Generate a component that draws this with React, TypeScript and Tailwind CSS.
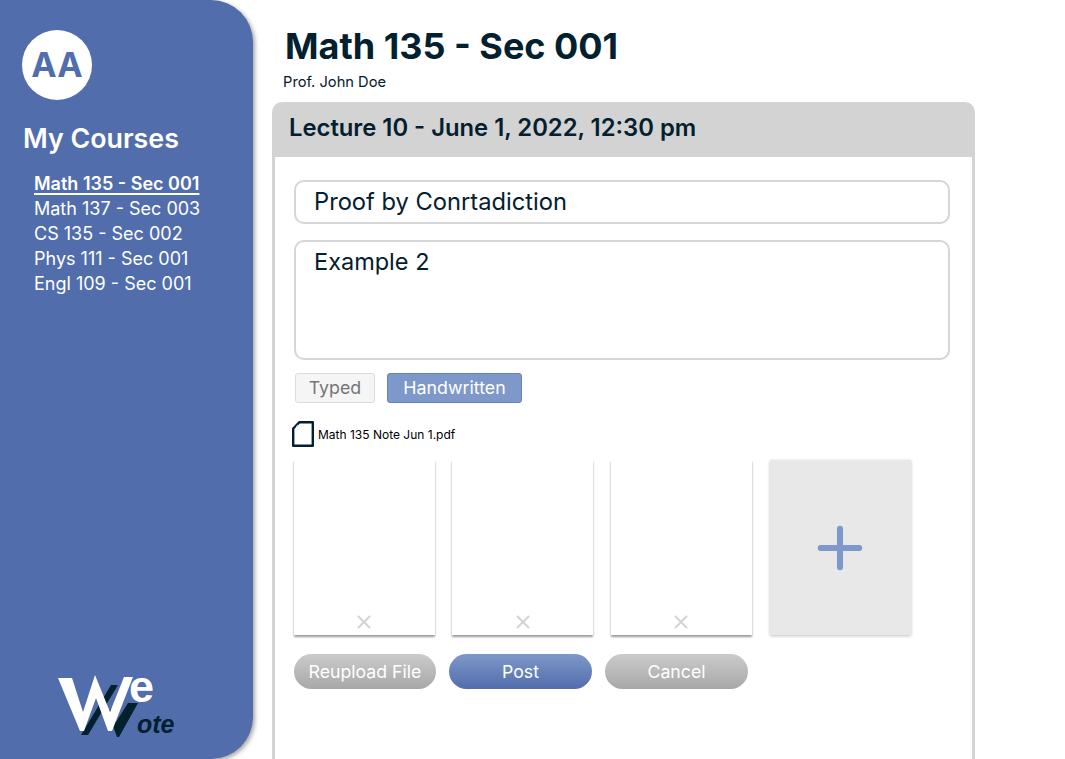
import React from 'react';
import { Plus, X } from 'lucide-react';

const courses = ['Math 135 - Sec 001', 'Math 137 - Sec 003', 'CS 135 - Sec 002', 'Phys 111 - Sec 001', 'Engl 109 - Sec 001'];

const Logo = () => (
  <svg width="124" height="80" viewBox="0 -10 124 80" className="block">
    <polygon points="23,67 30,67 60,17 53,17" fill="#03202f" />
    <polygon points="50,44 59,69 61,69 80,35 70,35 58,54 54,40" fill="#03202f" />
    <polygon points="0,10 14,10 25,44 37,7 52,44 66,9 75,9 54,63 50,63 38,30 26,63 22,63" fill="#ffffff" />
    <text x="71" y="34" fontSize="45" fontWeight="700" fill="#ffffff" fontFamily="'Liberation Sans', sans-serif">e</text>
    <text x="79" y="65" fontSize="25" fontWeight="700" fontStyle="italic" fill="#03202f" fontFamily="'Liberation Sans', sans-serif">ote</text>
  </svg>
);

const PageThumb = () => (
  <div className="w-[141px] h-[175px] bg-white flex items-end justify-center pb-[2px] shadow-[0_2px_2px_rgba(0,0,0,0.4)]">
    <X size={22} strokeWidth={2.2} className="text-[#d4d4d4]" />
  </div>
);

const App: React.FC = () => {
  return (
    <div className="w-[1065px] h-[759px] overflow-hidden bg-white flex text-[#03202f] font-['Inter',sans-serif]">
      {/* Sidebar */}
      <aside className="w-[253px] h-[759px] shrink-0 bg-[#526dac] rounded-r-[42px] shadow-[2px_2px_4px_rgba(0,0,0,0.35)] flex flex-col pt-[30px] pl-[22px]">
        <div className="w-[70px] h-[70px] rounded-full bg-white flex items-center justify-center text-[#526dac] text-[34px] font-bold leading-none">AA</div>
        <h2 className="mt-[21px] ml-px text-[26.8px] leading-[34px] font-semibold text-white">My Courses</h2>
        <ul className="mt-[16px] ml-3 text-[18px] leading-[25px] text-white">
          {courses.map((c, i) => (
            <li key={c} className={i === 0 ? 'font-semibold underline decoration-2 underline-offset-[3px]' : ''}>
              {c}
            </li>
          ))}
        </ul>
        <div className="mt-auto mb-[21px] ml-[36px]">
          <Logo />
        </div>
      </aside>

      {/* Main */}
      <main className="ml-[19px] w-[703px] flex flex-col">
        <h1 className="mt-[24px] ml-[13px] text-[36px] leading-[44px] font-bold">Math 135 - Sec 001</h1>
        <p className="mt-[6px] ml-[11px] text-[14.7px] leading-[17px]">Prof. John Doe</p>
        <section className="mt-[11px] flex-1 flex flex-col">
          <div className="h-[55px] shrink-0 bg-[#d3d3d3] rounded-t-[10px] flex items-center pl-[17px] pb-[3px] text-[23.8px] font-semibold">
            Lecture 10 - June 1, 2022, 12:30 pm
          </div>
          <div className="flex-1 border-x-[3px] border-[#d3d3d3] pt-[23px] pl-[19px] pr-[22px]">
            <div className="h-[44px] rounded-[10px] border-2 border-[#d5d5d5] flex items-center pl-[18px] text-[23.7px]">Proof by Conrtadiction</div>
            <div className="mt-[16px] h-[120px] rounded-[10px] border-2 border-[#d5d5d5] pl-[18px] pt-[2px] text-[23.5px] leading-[36px]">Example 2</div>

            <div className="mt-[13px] ml-px flex gap-3">
              <button className="w-[80px] h-[30px] rounded-[3px] bg-[#f5f5f5] border border-[#dcdcdc] text-[17.8px] text-[#757575]">Typed</button>
              <button className="w-[135px] h-[30px] rounded-[3px] bg-[#7e98c9] border border-[#6482bb] text-[17.8px] text-white">Handwritten</button>
            </div>

            <div className="mt-[18px] -ml-[2px] flex items-center gap-[4px]">
              <svg width="22" height="26" viewBox="0 0 22 26" fill="none">
                <path d="M7.5 1.2H20.8V24.8H1.2V7.5Z" stroke="#03202f" strokeWidth="2.4" strokeLinejoin="round" />
                <path d="M6 6H3.6L6 3.6Z" fill="#cfd4d8" />
              </svg>
              <span className="text-[12px] leading-[15px] text-black">Math 135 Note Jun 1.pdf</span>
            </div>

            <div className="mt-[13px] -ml-[0.5px] flex gap-[17.7px]">
              <PageThumb />
              <PageThumb />
              <PageThumb />
              <div className="w-[141px] h-[175px] bg-[#e8e8e8] shadow-[0_1px_3px_rgba(0,0,0,0.25)] flex items-center justify-center">
                <Plus size={66} strokeWidth={2.2} className="text-[#7e98c9]" />
              </div>
            </div>

            <div className="mt-[19px] flex gap-[13px]">
              <button className="w-[142px] h-[35px] pt-px rounded-full bg-gradient-to-b from-[#cbcbcb] to-[#a8a8a8] text-[17.7px] text-white">Reupload File</button>
              <button className="w-[143px] h-[35px] pt-px rounded-full bg-gradient-to-b from-[#7e98c9] to-[#526dac] text-[17.7px] text-white">Post</button>
              <button className="w-[143px] h-[35px] pt-px rounded-full bg-gradient-to-b from-[#cbcbcb] to-[#a8a8a8] text-[17.7px] text-white">Cancel</button>
            </div>
          </div>
        </section>
      </main>
    </div>
  );
};

export default App;
